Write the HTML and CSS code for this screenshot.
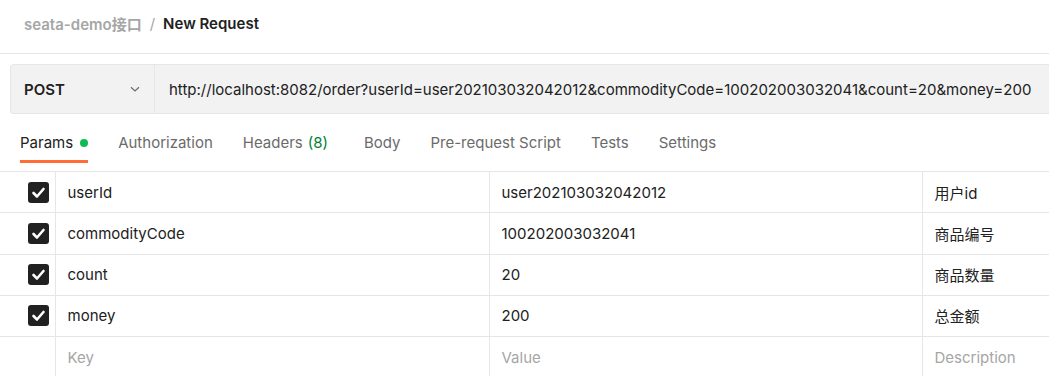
FILE: index.html
```html
<!DOCTYPE html>
<html lang="en">
<head>
    <meta charset="UTF-8">
    <title>New Request</title>
    <link rel="stylesheet" href="styles.css">
</head>
<body>
    <header class="crumbs">
        <span class="collection">seata-demo接口</span>
        <span class="sep">/</span>
        <span class="request">New Request</span>
    </header>

    <div class="urlbar">
        <div class="method">
            <span>POST</span>
            <svg class="chevron" width="12" height="12" viewBox="0 0 12 12">
                <path d="M2 4.2 L6 8 L10 4.2" fill="none" stroke="#6b6b6b" stroke-width="1.2"/>
            </svg>
        </div>
        <div class="url">http://localhost:8082/order?userId=user202103032042012&amp;commodityCode=100202003032041&amp;count=20&amp;money=200</div>
    </div>

    <nav class="tabs">
        <div class="tab active">Params <span class="dot"></span></div>
        <div class="tab">Authorization</div>
        <div class="tab headers">Headers <span class="count">(8)</span></div>
        <div class="tab">Body</div>
        <div class="tab">Pre-request Script</div>
        <div class="tab">Tests</div>
        <div class="tab">Settings</div>
    </nav>

    <table class="params">
        <colgroup>
            <col class="c-check">
            <col class="c-key">
            <col class="c-value">
            <col>
        </colgroup>
        <tr>
            <td class="check"><span class="box"></span></td>
            <td>userId</td>
            <td>user202103032042012</td>
            <td>用户id</td>
        </tr>
        <tr>
            <td class="check"><span class="box"></span></td>
            <td>commodityCode</td>
            <td>100202003032041</td>
            <td>商品编号</td>
        </tr>
        <tr>
            <td class="check"><span class="box"></span></td>
            <td>count</td>
            <td>20</td>
            <td>商品数量</td>
        </tr>
        <tr>
            <td class="check"><span class="box"></span></td>
            <td>money</td>
            <td>200</td>
            <td>总金额</td>
        </tr>
        <tr class="empty">
            <td class="check"></td>
            <td>Key</td>
            <td>Value</td>
            <td>Description</td>
        </tr>
    </table>
</body>
</html>
```

FILE: styles.css
```css
:root {
    --text: #212121;
    --muted: #6b6b6b;
    --faint: #a6a6a6;
    --line: #e6e6e6;
    --field: #f2f2f2;
    --accent: #ff6c37;
    --green: #0cbb52;
}

body, html {
    margin: 0;
    padding: 0;
    font-family: Inter, "Noto Sans CJK SC", sans-serif;
    color: var(--text);
    background: #ffffff;
    overflow: hidden;
}

.crumbs {
    height: 47px;
    padding: 0 24px 6px;
    display: flex;
    align-items: center;
    font-size: 15px;
    font-weight: 600;
    border-bottom: 1px solid var(--line);
    margin-bottom: 10px;
}

.collection {
    color: var(--faint);
}

.sep {
    color: var(--faint);
    font-weight: 400;
    margin: 0 8px;
}

.urlbar {
    display: flex;
    height: 48px;
    margin-left: 10px;
    background: var(--field);
    border: 1px solid var(--line);
    border-right: none;
    border-radius: 4px 0 0 4px;
    font-size: 15px;
}

.method {
    width: 130px;
    padding: 0 0 0 13px;
    display: flex;
    align-items: center;
    justify-content: space-between;
    border-right: 1px solid var(--line);
    font-weight: 600;
}

.chevron {
    margin-right: 13px;
}

.url {
    display: flex;
    align-items: center;
    padding-left: 14px;
    white-space: nowrap;
}

.tabs {
    display: flex;
    gap: 30px;
    padding: 0 20px;
    height: 57px;
    border-bottom: 1px solid var(--line);
    font-size: 15px;
}

.tab {
    display: flex;
    align-items: center;
    color: var(--muted);
    position: relative;
}

.tab.active {
    color: var(--text);
}

.tab.active::after {
    content: '';
    position: absolute;
    left: 0;
    right: 0;
    bottom: 8px;
    height: 3px;
    background: var(--accent);
}

.dot {
    width: 8px;
    height: 8px;
    border-radius: 50%;
    background: var(--green);
    margin-left: 7px;
}

.tab.headers {
    margin-right: 6px;
}

.count {
    color: #007f31;
    margin-left: 5px;
}

.params {
    border-collapse: collapse;
    table-layout: fixed;
    width: 100%;
    font-size: 15px;
}

.c-check {
    width: 55px;
}

.c-key {
    width: 434px;
}

.c-value {
    width: 433px;
}

.params td {
    height: 40.25px;
    padding: 0 12px;
    white-space: nowrap;
    border-bottom: 1px solid var(--line);
    border-left: 1px solid var(--line);
}

.params td.check {
    border-left: none;
    padding: 0 0 0 28px;
}

.params tr.empty td {
    color: var(--faint);
}

.box {
    display: block;
    width: 21px;
    height: 21px;
    border-radius: 3px;
    background: #212121 url("data:image/svg+xml,%3Csvg xmlns='http://www.w3.org/2000/svg' width='21' height='21'%3E%3Cpath d='M5.5 11 L9 14.5 L15.5 7' fill='none' stroke='white' stroke-width='2.6' stroke-linecap='round' stroke-linejoin='round'/%3E%3C/svg%3E") no-repeat center;
}
```
